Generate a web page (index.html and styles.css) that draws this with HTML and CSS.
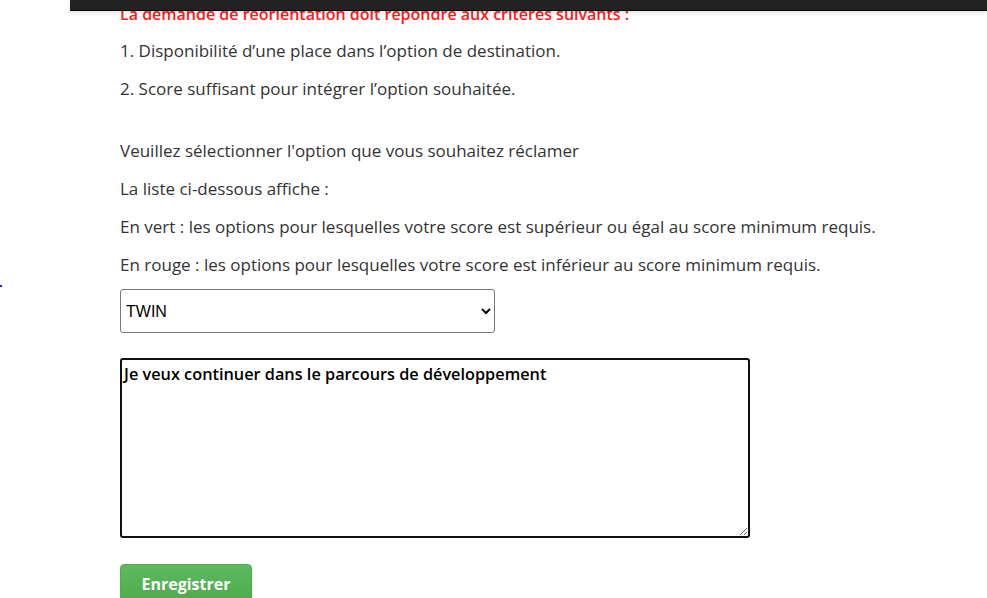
FILE: index.html
```html
<!DOCTYPE html>
<html lang="fr">
<head>
<meta charset="utf-8">
<title>Réorientation</title>
<link rel="stylesheet" href="styles.css">
</head>
<body>
<div class="topbar"></div>
<span class="dot"></span>
<main class="content">
  <p class="alert">La demande de réorientation doit répondre aux critères suivants :</p>
  <p>1. Disponibilité d’une place dans l’option de destination.</p>
  <p>2. Score suffisant pour intégrer l’option souhaitée.</p>
  <p class="spaced">Veuillez sélectionner l'option que vous souhaitez réclamer</p>
  <p>La liste ci-dessous affiche :</p>
  <p>En vert : les options pour lesquelles votre score est supérieur ou égal au score minimum requis.</p>
  <p>En rouge : les options pour lesquelles votre score est inférieur au score minimum requis.</p>
  <select class="choice">
    <option>TWIN</option>
  </select>
  <textarea class="motif">Je veux continuer dans le parcours de développement </textarea>
  <button class="save" type="button">Enregistrer</button>
</main>
</body>
</html>
```

FILE: styles.css
```css
html, body {
  margin: 0;
  padding: 0;
  background: #fff;
  overflow: hidden;
}
body {
  font-family: "Open Sans", "Liberation Sans", sans-serif;
  font-size: 17px;
  color: #333;
  height: 598px;
  position: relative;
}
.topbar {
  position: absolute;
  top: 0;
  left: 70px;
  right: 0;
  height: 10px;
  background: #222;
  border-bottom: 1px solid #080808;
  box-shadow: 0 2px 4px rgba(0,0,0,0.12);
  z-index: 10;
}
.dot {
  position: absolute;
  left: 0;
  top: 285px;
  width: 2px;
  height: 2px;
  background: #2222dd;
}
.content {
  padding-left: 120px;
  display: flex;
  flex-direction: column;
  align-items: flex-start;
}
.content p {
  margin: 0 0 16px;
  line-height: 22px;
}
.content p.alert {
  color: #ff1a1a;
  font-size: 16px;
  font-weight: 600;
  margin-top: 3px;
  margin-bottom: 15px;
}
.content p.spaced {
  margin-top: 24px;
}
.choice {
  margin-top: -3px;
  width: 375px;
  height: 44px;
  font-family: "Liberation Sans", Arial, sans-serif;
  font-size: 16px;
  color: #000;
  padding: 0 1px;
  border: 1px solid #767676;
  border-radius: 3px;
  background: #fff;
}
.motif {
  margin-top: 25px;
  width: 630px;
  height: 180px;
  box-sizing: border-box;
  border: 2px solid #101010;
  border-radius: 3px;
  padding: 3px 2px;
  font-family: "Open Sans", "Liberation Sans", sans-serif;
  font-weight: 600;
  font-size: 16.3px;
  color: #000;
  resize: both;
  outline: none;
}
.save {
  margin-top: 26px;
  width: 132px;
  height: 38px;
  border: 1px solid #4cae4c;
  border-radius: 4px;
  background: linear-gradient(#5fba5f, #4caa4c);
  color: #fff;
  font-family: "Open Sans", "Liberation Sans", sans-serif;
  font-weight: 700;
  font-size: 16px;
  padding-top: 3px;
}
```
